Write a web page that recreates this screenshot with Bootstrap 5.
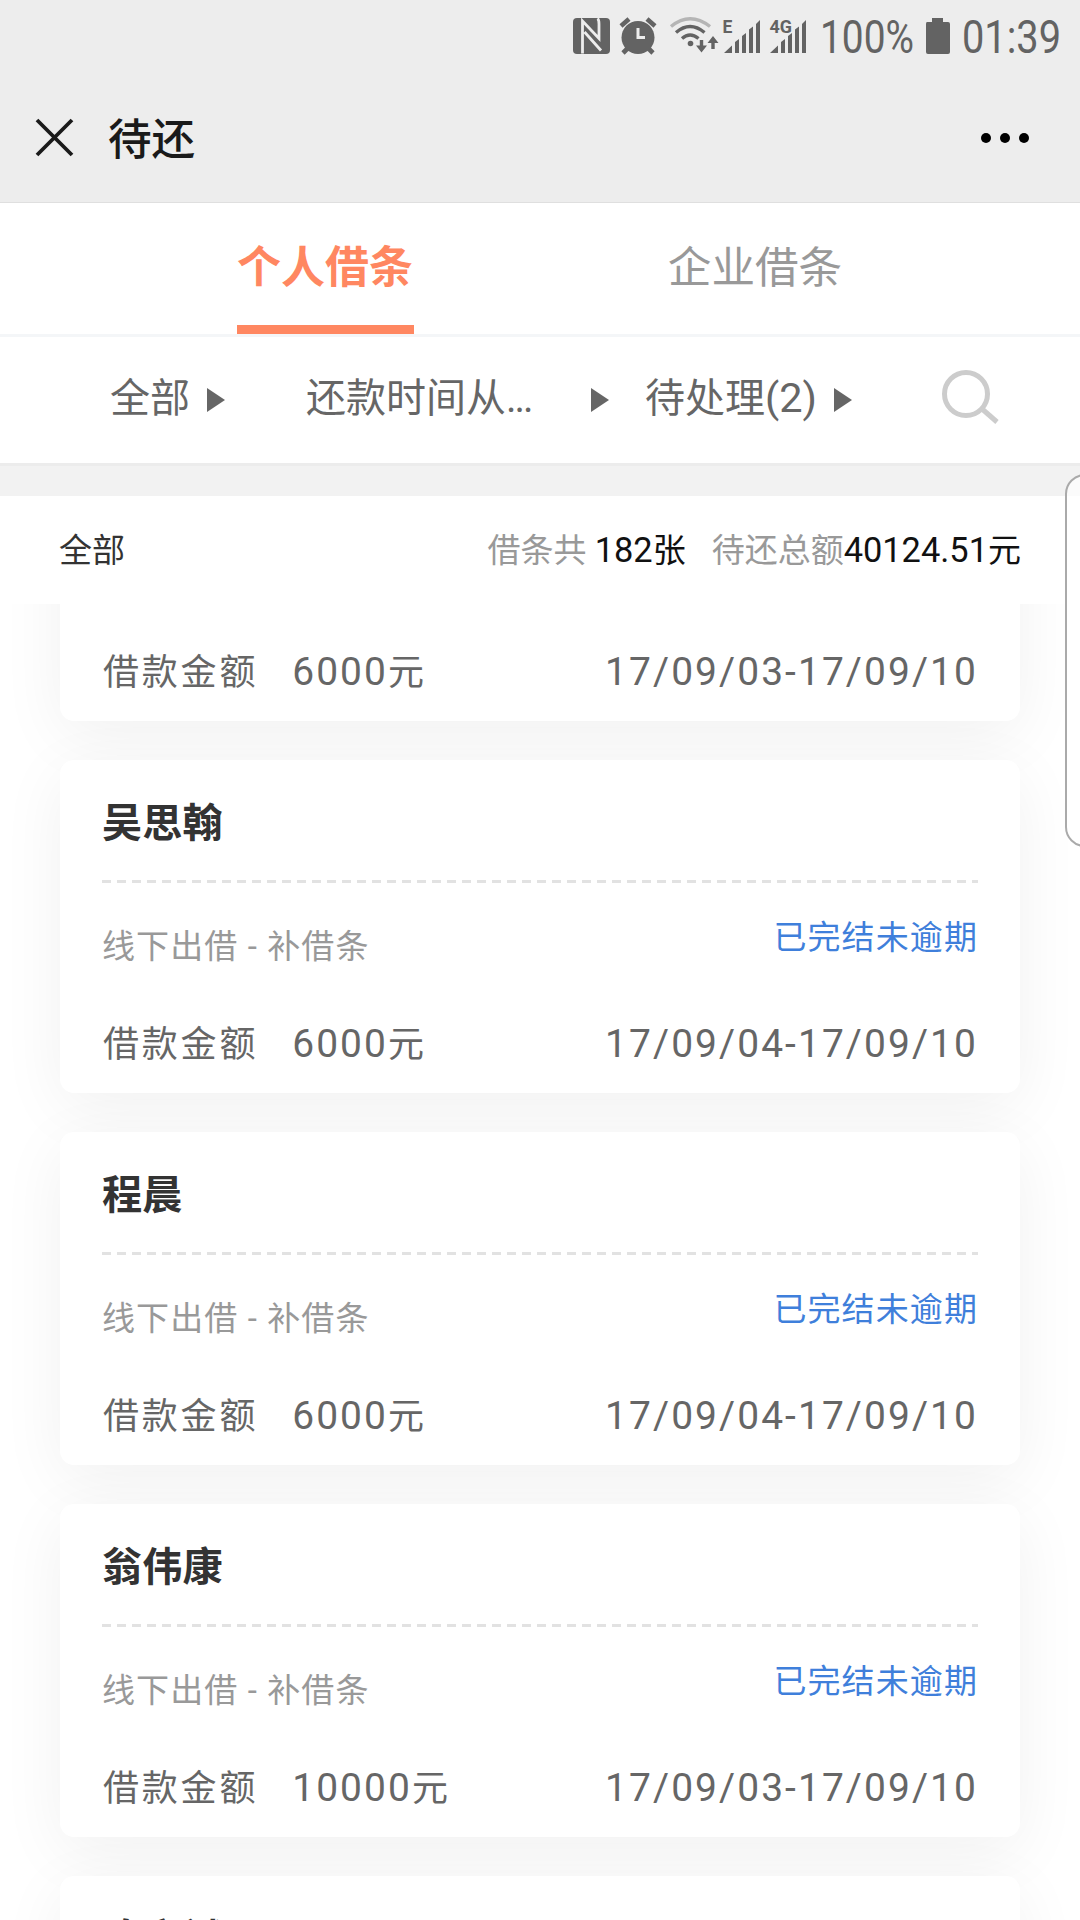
<!DOCTYPE html>
<html lang="zh-CN">
<head>
<meta charset="utf-8">
<meta name="viewport" content="width=device-width, initial-scale=1">
<title>待还</title>
<link href="https://cdn.jsdelivr.net/npm/bootstrap@5.3.0/dist/css/bootstrap.min.css" rel="stylesheet">
<style>
body{font-family:Roboto,"Noto Sans CJK SC",sans-serif;background:#fff;color:#333;width:1080px;height:1920px;overflow:hidden}
svg{display:block;flex:none;overflow:visible}
.top-area{background:#ededed;height:203px;border-bottom:1px solid #dfdfdf}
.status-row{height:76px}
.status-row text{font-family:Roboto,sans-serif;fill:#636363}
.title-row{height:126px;padding:0 50px 3px 35px}
.page-title{font-size:43.6px;line-height:60px;font-weight:500;color:#1a1a1a;margin-left:34px;padding-top:6px}
.tab-row{height:134px;padding:0 110px;border-bottom:3px solid #f4f6f8}
.tab-row .nav-link{height:131px;padding:33px 0 0;font-size:43.6px;line-height:66px;color:#999;border-radius:0;border-bottom:9px solid transparent;width:177px}
.tab-row .nav-link.active{padding-top:32px;color:#ff8761;font-weight:700;font-size:44px;border-color:#ff8761}
.filter-row{height:126px;padding:0 80px 4px 110px;font-size:40px;line-height:60px;color:#666}
.tri{width:0;height:0;border-left:18px solid #666;border-top:12px solid transparent;border-bottom:12px solid transparent;margin-top:4px}
.filter-all{width:97px;margin-top:1px}.filter-time{width:285px;margin-left:81px;margin-top:1px}.filter-todo{width:189px;margin-left:36px;margin-top:1px;white-space:nowrap}
.dots{letter-spacing:-2px}
.count-num{font-size:41.5px}
.band{height:33px;background:#f2f2f2;border-top:3px solid #ececec}
.summary-row{height:108px;padding:1px 59px 0;font-size:33px;line-height:50px;background:#fff;z-index:2}
.total-part{margin-left:26px}
.num-text{font-size:34.4px}
.c-soft{color:#999}.c-dark{color:#111}
.list-area{height:1316px;padding:0 60px;overflow:hidden}
.loan-card{flex:none;height:333px;margin-bottom:39px;border:0;border-radius:14px;padding:0 42px;background:#fff;box-shadow:0 15px 66px rgba(0,0,0,.06)}
.loan-card.cut-top{margin-top:-216px}
.who{height:120px;padding-top:34px;font-size:40.2px;line-height:60px;font-weight:700;color:#333}
.dash-line{height:3px;background:repeating-linear-gradient(90deg,#e2e2e2 0 9px,transparent 9px 15px)}
.kind-row{height:110px;font-size:33px;letter-spacing:1.1px;line-height:50px;color:#999}
.kind{padding-top:39px}.state{padding-top:30px;color:#3f7fdb}
.sum-row{font-size:36px;letter-spacing:2.8px;line-height:54px;height:54px;margin-top:24px;padding-left:1px;color:#666}
.sum-row .num-text{font-size:38.9px;letter-spacing:2.1px}
.sum-label{padding-top:1px}
.amt{margin-left:34px}
.edge-panel{position:absolute;left:1065px;top:474px;width:40px;height:373px;border:2px solid #aaa;border-radius:22px;background:rgba(255,255,255,.7);z-index:5}
</style>
<script src="https://cdn.jsdelivr.net/npm/bootstrap@5.3.0/dist/js/bootstrap.bundle.min.js"></script>
</head>
<body class="position-relative">
<header class="top-area">
  <div class="status-row d-flex justify-content-end">
    <svg width="45" height="76" viewBox="570 0 45 76"><rect x="573" y="18" width="37" height="36" rx="4" fill="#636363"/><path d="M582.500 53.500V21L599 38.500V24Q599 19.500 597.500 18.500M584.500 32L601 50.500" fill="none" stroke="#ededed" stroke-width="2.800"/></svg>
    <svg width="50" height="76" viewBox="615 0 50 76"><g stroke="#636363" stroke-width="4.600"><path d="M621 26l8-7M655 26l-8-7M628 48l-5 5M648 48l5 5"/></g><circle cx="638" cy="37.500" r="16.500" fill="#636363"/><path d="M638 28v9.500h7" fill="none" stroke="#ededed" stroke-width="3"/></svg>
    <svg width="57" height="76" viewBox="665 0 57 76"><g fill="none" stroke="#636363" stroke-width="3.400"><path d="M671 26.500Q690 11 710 26.500" stroke="#b5b5b5"/><path d="M676 32.500Q690 20.500 704.500 32.500M682 38.500Q690 31.500 698.500 38.500"/><path d="M701.500 40v9M713 49v-9"/></g><circle cx="690.500" cy="43.500" r="2.800" fill="#636363"/><path d="M696 45.500h11l-5.500 7zM707.500 43h11l-5.500-7z" fill="#636363"/></svg>
    <svg width="46" height="76" viewBox="722 0 46 76"><path d="M724 53l8-7.500V53zM735 53V42l4-3v14zM742 53V36l4-3v20zM749 53V29.500l4-3V53zM756 53V24l4-4v33z" fill="#636363"/><text x="722.500" y="33" font-size="17.500" font-weight="700">E</text></svg>
    <svg width="44" height="76" viewBox="768 0 44 76"><path d="M770 53l8-7.500V53zM781 53V42l4-3v14zM788 53V36l4-3v20zM795 53V29.500l4-3V53zM802 53V24l4-4v33z" fill="#636363"/><text x="769.500" y="33" font-size="17.500" font-weight="700" textLength="22.500" lengthAdjust="spacingAndGlyphs">4G</text></svg>
    <svg width="110" height="76" viewBox="812 0 110 76"><text x="820" y="53" font-size="46" textLength="94" lengthAdjust="spacingAndGlyphs">100%</text></svg>
    <svg width="33" height="76" viewBox="922 0 33 76"><path d="M927 22h5v-4h11v4h5q2 0 2 2v28q0 2-2 2h-20q-2 0-2-2V24q0-2 1-2z" fill="#636363"/></svg>
    <svg width="125" height="76" viewBox="955 0 125 76"><text x="962" y="53" font-size="46" textLength="99" lengthAdjust="spacingAndGlyphs">01:39</text></svg>
  </div>
  <div class="title-row d-flex align-items-center">
    <svg width="39" height="39" viewBox="0 0 39 39"><path d="M2 2L37 37M37 2L2 37" stroke="#1a1a1a" stroke-width="3.800"/></svg>
    <div class="page-title">待还</div>
    <svg class="ms-auto" width="50" height="12" viewBox="0 0 50 12"><circle cx="6" cy="6" r="5"/><circle cx="25" cy="6" r="5"/><circle cx="44" cy="6" r="5"/></svg>
  </div>
</header>
<nav class="tab-row nav d-flex">
  <div class="col-6 d-flex justify-content-center"><a class="nav-link active text-center">个人借条</a></div>
  <div class="col-6 d-flex justify-content-center"><a class="nav-link text-center">企业借条</a></div>
</nav>
<div class="filter-row d-flex align-items-center">
  <div class="filter-all">全部</div><i class="tri"></i>
  <div class="filter-time">还款时间从<span class="dots">...</span></div><i class="tri"></i>
  <div class="filter-todo">待处理<span class="count-num">(2)</span></div><i class="tri"></i>
  <svg class="ms-auto" width="60" height="60" viewBox="0 0 60 60"><g fill="none" stroke="#ccc" stroke-width="5"><circle cx="26" cy="26" r="21.500"/><path d="M41 40L57 54"/></g></svg>
</div>
<div class="band"></div>
<div class="summary-row d-flex align-items-center position-relative">
  <div>全部</div>
  <div class="ms-auto c-soft">借条共 <span class="c-dark"><span class="num-text">182</span>张</span></div>
  <div class="c-soft total-part">待还总额<span class="c-dark"><span class="num-text">40124.51</span>元</span></div>
</div>
<main class="list-area d-flex flex-column">
  <article class="loan-card card cut-top">
    <div class="who"></div><div class="dash-line"></div>
    <div class="kind-row"></div>
    <div class="sum-row d-flex"><span class="sum-label">借款金额</span><span class="amt"><span class="num-text">6000</span>元</span><span class="ms-auto num-text">17/09/03-17/09/10</span></div>
  </article>
  <article class="loan-card card">
    <div class="who">吴思翰</div><div class="dash-line"></div>
    <div class="kind-row d-flex justify-content-between"><span class="kind">线下出借 - 补借条</span><span class="state">已完结未逾期</span></div>
    <div class="sum-row d-flex"><span class="sum-label">借款金额</span><span class="amt"><span class="num-text">6000</span>元</span><span class="ms-auto num-text">17/09/04-17/09/10</span></div>
  </article>
  <article class="loan-card card">
    <div class="who">程晨</div><div class="dash-line"></div>
    <div class="kind-row d-flex justify-content-between"><span class="kind">线下出借 - 补借条</span><span class="state">已完结未逾期</span></div>
    <div class="sum-row d-flex"><span class="sum-label">借款金额</span><span class="amt"><span class="num-text">6000</span>元</span><span class="ms-auto num-text">17/09/04-17/09/10</span></div>
  </article>
  <article class="loan-card card">
    <div class="who">翁伟康</div><div class="dash-line"></div>
    <div class="kind-row d-flex justify-content-between"><span class="kind">线下出借 - 补借条</span><span class="state">已完结未逾期</span></div>
    <div class="sum-row d-flex"><span class="sum-label">借款金额</span><span class="amt"><span class="num-text">10000</span>元</span><span class="ms-auto num-text">17/09/03-17/09/10</span></div>
  </article>
  <article class="loan-card card"><div class="who">陈文斌</div></article>
</main>
<div class="edge-panel"></div>
</body>
</html>
